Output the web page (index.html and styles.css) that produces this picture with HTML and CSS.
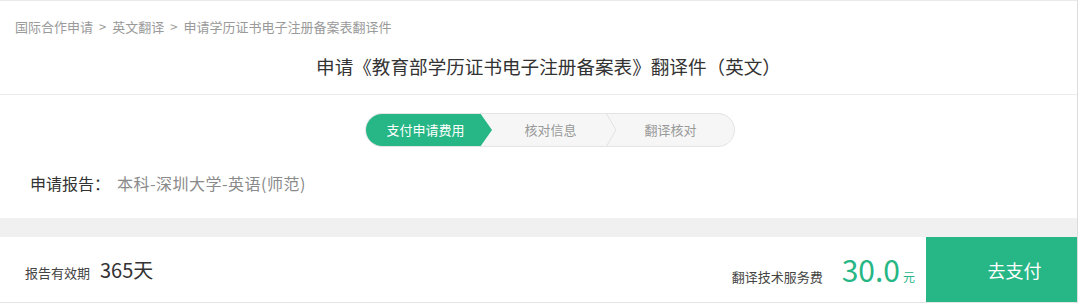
FILE: index.html
```html
<!DOCTYPE html>
<html lang="zh-CN">
<head>
<meta charset="utf-8">
<title>申请翻译件</title>
<link rel="stylesheet" href="styles.css">
</head>
<body>
<div class="page">
  <div class="header">
    <div class="crumbs">国际合作申请<span class="sep">&gt;</span>英文翻译<span class="sep">&gt;</span>申请学历证书电子注册备案表翻译件</div>
    <h1 class="title">申请《教育部学历证书电子注册备案表》翻译件（英文）</h1>
  </div>
  <div class="content">
    <div class="steps-row">
      <div class="steps">
        <div class="step active">支付申请费用</div>
        <div class="step second">核对信息<svg class="chev" width="12" height="34" viewBox="0 0 12 34"><path d="M1 0 L11 17 L1 34" fill="none" stroke="#e2e2e2" stroke-width="1"/></svg></div>
        <div class="step third">翻译核对</div>
      </div>
    </div>
    <div class="report"><span class="label">申请报告：</span><span class="value">本科-深圳大学-英语(师范)</span></div>
  </div>
  <div class="band"></div>
  <div class="footer">
    <div class="validity"><span class="v-label">报告有效期</span><span class="v-value">365天</span></div>
    <div class="price"><span class="p-label">翻译技术服务费</span><span class="p-value">30.0</span><span class="p-unit">元</span></div>
    <button class="pay">去支付</button>
  </div>
</div>
</body>
</html>
```

FILE: styles.css
```css
html, body {
  margin: 0;
  padding: 0;
  background: #ffffff;
}
body {
  font-family: "Noto Sans CJK SC", "Noto Sans", sans-serif;
  color: #333;
}
.page {
  width: 1077px;
  border-top: 1px solid #e9e9e9;
  border-right: 1px solid #dcdcdc;
  border-bottom: 1px solid #e4e4e4;
  background: #fff;
}
.header {
  border-bottom: 1px solid #ececec;
  padding-bottom: 16px;
}
.crumbs {
  padding: 17px 0 0 15px;
  font-size: 13px;
  line-height: 18px;
  color: #9a9a9a;
}
.sep {
  margin: 0 6px;
}
.title {
  margin: 17px 0 0 0;
  font-size: 18.6px;
  font-weight: normal;
  line-height: 25px;
  color: #333;
  text-align: center;
  padding-left: 20px;
}
.content {
  padding-bottom: 23px;
}
.steps-row {
  display: flex;
  padding: 18px 0 0 365px;
}
.steps {
  display: flex;
  width: 368px;
  height: 32px;
  border: 1px solid #e4e4e4;
  border-radius: 17px;
  background: #f6f6f6;
  overflow: hidden;
  font-size: 13px;
  line-height: 32px;
}
.step {
  position: relative;
  text-align: center;
  color: #999;
}
.step.active {
  width: 127px;
  margin: -1px 0 -1px -1px;
  line-height: 34px;
  padding-right: 6px;
  box-sizing: border-box;
  background: #27b685;
  color: #fff;
  border-radius: 17px 0 0 17px;
  clip-path: polygon(0 0, calc(100% - 12px) 0, 100% 50%, calc(100% - 12px) 100%, 0 100%);
}
.step.second {
  width: 131px;
  margin-left: -12px;
  padding-left: 10px;
  box-sizing: border-box;
}
.chev {
  position: absolute;
  right: -6px;
  top: -1px;
}
.step.third {
  flex: 1;
  padding-right: 4px;
}
.report {
  padding: 24px 0 0 30px;
  font-size: 16px;
  line-height: 24px;
}
.report .label {
  color: #333;
}
.report .value {
  color: #8a8a8a;
  margin-left: 7px;
  letter-spacing: 0.5px;
}
.band {
  height: 19px;
  background: #f0f0f0;
}
.footer {
  display: flex;
  align-items: center;
  height: 65px;
}
.validity {
  display: flex;
  align-items: baseline;
  padding-left: 25px;
}
.v-label {
  font-size: 13px;
  color: #444;
}
.v-value {
  font-size: 20px;
  color: #333;
  margin-left: 10px;
}
.price {
  display: flex;
  align-items: baseline;
  margin-left: auto;
  margin-right: 11px;
}
.p-label {
  font-size: 13px;
  color: #444;
  margin-right: 19px;
}
.p-value {
  font-size: 30px;
  color: #27b685;
  line-height: 1;
}
.p-unit {
  font-size: 12px;
  color: #27b685;
  margin-left: 3px;
}
.pay {
  width: 151px;
  height: 65px;
  border: none;
  margin: 0;
  padding: 0 0 0 26px;
  background: #27b685;
  color: #fff;
  font-family: inherit;
  font-size: 18px;
}
```
